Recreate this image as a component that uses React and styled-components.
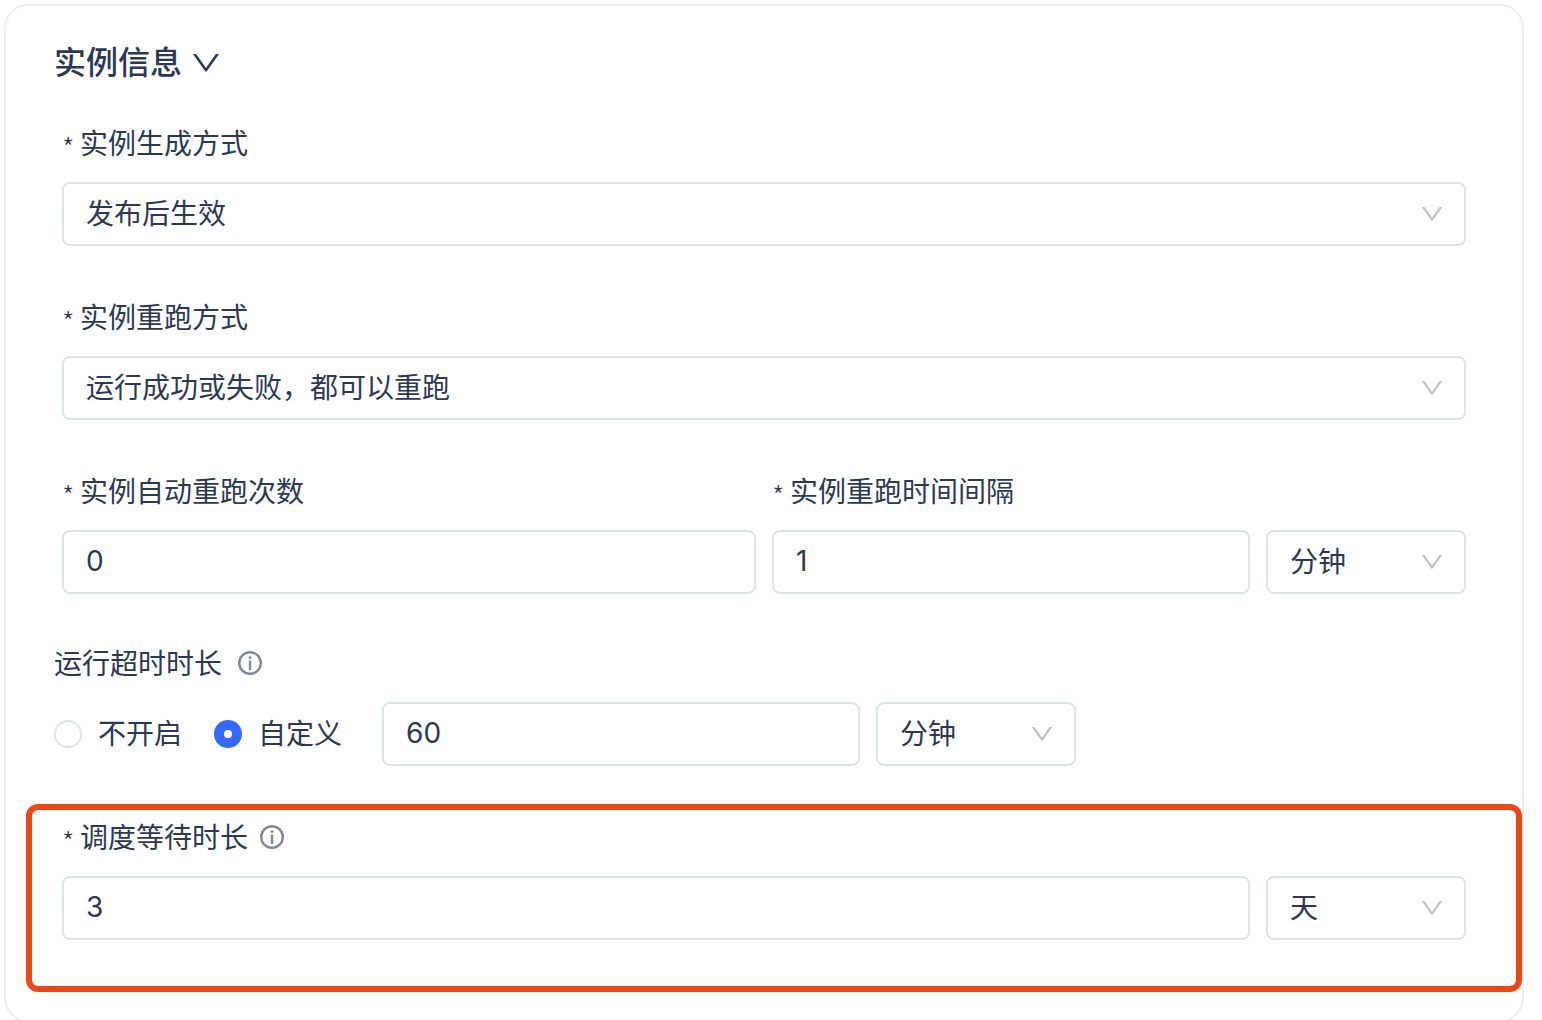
import React, { useState } from 'react';
import styled, { createGlobalStyle, ThemeProvider } from 'styled-components';

const theme = {
  colors: {
    text: '#2b3954',
    border: '#dfe3eb',
    cardBorder: '#ebeff4',
    primary: '#3569fd',
    arrow: '#bfbfbf',
    info: '#7f899a',
    highlight: '#f04614',
  },
};

const GlobalStyle = createGlobalStyle`
  *, *::before, *::after {
    box-sizing: border-box;
  }
  body {
    margin: 0;
    background: #ffffff;
  }
  body, input, select, button {
    font-family: Inter, 'Noto Sans CJK SC', sans-serif;
    font-size: 28px;
    color: ${theme.colors.text};
  }
`;

const Page = styled.main`
  height: 100vh;
  overflow-y: auto;
  scrollbar-width: none;
  padding: 4px 18px 0 4px;
`;

const Card = styled.section`
  border: 2px solid ${({ theme }) => theme.colors.cardBorder};
  border-radius: 24px;
  padding: 34px 0 28px;
`;

const Title = styled.h2`
  margin: 0 48px 34px;
  font-size: 32px;
  font-weight: 500;
  line-height: 46px;
`;

const TitleButton = styled.button`
  display: flex;
  align-items: center;
  gap: 10px;
  padding: 0;
  border: none;
  background: none;
  font: inherit;
  cursor: pointer;
`;

const Fields = styled.div`
  display: flex;
  flex-direction: column;
  gap: 48px;
  padding: 0 56px;
`;

const Columns = styled.div`
  display: grid;
  grid-template-columns: 1fr 1fr;
  gap: 16px;
`;

const Field = styled.div`
  min-width: 0;
`;

const Timeout = styled.div`
  margin: 46px 48px 0;
`;

const Highlight = styled.div`
  margin: 38px 0 0 20px;
  padding: 4px 50px 46px 30px;
  border: 6px solid ${({ theme }) => theme.colors.highlight};
  border-radius: 12px;
`;

const LabelRow = styled.div`
  display: flex;
  align-items: center;
  gap: ${({ $gap }) => $gap || 12}px;
  height: 46px;
  margin-bottom: 16px;
`;

const Label = styled.label`
  display: flex;
  align-items: center;
  padding-top: 2px;
  line-height: 46px;
`;

const Star = styled.span`
  width: 18px;
  padding-top: 6px;
  font-family: 'Noto Sans CJK SC', sans-serif;
  font-weight: 300;
`;

const Row = styled.div`
  display: flex;
  align-items: center;
  gap: 16px;
`;

const Input = styled.input`
  flex: ${({ $wide }) => ($wide ? '0 1 478px' : '1 1 0')};
  min-width: 0;
  width: 100%;
  height: 64px;
  padding: 0 22px 2px;
  border: 2px solid ${({ theme }) => theme.colors.border};
  border-radius: 8px;
  background: #ffffff;
  outline: none;

  &:focus {
    border-color: ${({ theme }) => theme.colors.primary};
  }
`;

const SelectBox = styled.div`
  display: grid;
  align-items: center;
  flex: 0 0 ${({ $unit }) => ($unit ? '200px' : '100%')};

  > * {
    grid-area: 1 / 1;
  }
  > svg {
    justify-self: end;
    margin-right: 24px;
    pointer-events: none;
  }
`;

const NativeSelect = styled.select`
  appearance: none;
  width: 100%;
  height: 64px;
  padding: 0 50px 0 22px;
  border: 2px solid ${({ theme }) => theme.colors.border};
  border-radius: 8px;
  background: #ffffff;
  outline: none;

  &:focus {
    border-color: ${({ theme }) => theme.colors.primary};
  }
`;

const RadioGroup = styled.div`
  display: flex;
  gap: 32px;
  margin-right: 24px;
`;

const RadioLabel = styled.label`
  display: flex;
  align-items: center;
  gap: 16px;
  line-height: 46px;
  white-space: nowrap;
`;

const Radio = styled.input`
  appearance: none;
  width: 28px;
  height: 28px;
  margin: 0;
  border: 2px solid ${({ theme }) => theme.colors.border};
  border-radius: 50%;
  background: #ffffff;

  &:checked {
    border: 10px solid ${({ theme }) => theme.colors.primary};
  }
`;

function Chevron({ width, height, color }) {
  return (
    <svg width={width} height={height} viewBox="0 0 20 14" fill={color} aria-hidden="true">
      <path d="M0.2 0H2.1Q2.4 0 2.6 0.3L10 10.8L17.4 0.3Q17.6 0 17.9 0H19.8Q20.1 0 19.9 0.4L10.6 13.5Q10 14.2 9.4 13.5L0.1 0.4Q-0.1 0 0.2 0Z" />
    </svg>
  );
}

function InfoIcon() {
  return (
    <svg width="24" height="24" viewBox="0 0 24 24" fill="none" stroke={theme.colors.info} role="img" aria-label="说明">
      <circle cx="12" cy="12" r="10.8" strokeWidth="2.4" />
      <path d="M12 10.4V18" strokeWidth="2.4" strokeLinecap="round" />
      <circle cx="12" cy="6.6" r="1.4" fill={theme.colors.info} stroke="none" />
    </svg>
  );
}

function FieldLabel({ htmlFor, children, info }) {
  return (
    <LabelRow>
      <Label htmlFor={htmlFor}>
        <Star>*</Star>
        {children}
      </Label>
      {info && <InfoIcon />}
    </LabelRow>
  );
}

function Select({ unit, options, ...rest }) {
  return (
    <SelectBox $unit={unit}>
      <NativeSelect {...rest}>
        {options.map((option) => (
          <option key={option}>{option}</option>
        ))}
      </NativeSelect>
      <Chevron width={20} height={14} color={theme.colors.arrow} />
    </SelectBox>
  );
}

export default function App() {
  const [open, setOpen] = useState(true);
  const [timeout, setTimeoutMode] = useState('custom');

  return (
    <ThemeProvider theme={theme}>
      <GlobalStyle />
      <Page>
        <Card>
          <Title>
            <TitleButton type="button" aria-expanded={open} onClick={() => setOpen(!open)}>
              实例信息
              <Chevron width={28} height={18} color={theme.colors.text} />
            </TitleButton>
          </Title>
          {open && (
            <>
              <Fields>
                <Field>
                  <FieldLabel htmlFor="generate">实例生成方式</FieldLabel>
                  <Select id="generate" options={['发布后生效']} />
                </Field>
                <Field>
                  <FieldLabel htmlFor="rerun">实例重跑方式</FieldLabel>
                  <Select id="rerun" options={['运行成功或失败，都可以重跑']} />
                </Field>
                <Columns>
                  <Field>
                    <FieldLabel htmlFor="times">实例自动重跑次数</FieldLabel>
                    <Input id="times" defaultValue="0" />
                  </Field>
                  <Field>
                    <FieldLabel htmlFor="interval">实例重跑时间间隔</FieldLabel>
                    <Row>
                      <Input id="interval" defaultValue="1" />
                      <Select unit aria-label="间隔单位" options={['分钟']} />
                    </Row>
                  </Field>
                </Columns>
              </Fields>

              <Timeout>
                <LabelRow $gap={16}>
                  <Label htmlFor="timeout">运行超时时长</Label>
                  <InfoIcon />
                </LabelRow>
                <Row>
                  <RadioGroup>
                    <RadioLabel>
                      <Radio
                        type="radio"
                        name="timeout"
                        checked={timeout === 'off'}
                        onChange={() => setTimeoutMode('off')}
                      />
                      不开启
                    </RadioLabel>
                    <RadioLabel>
                      <Radio
                        type="radio"
                        name="timeout"
                        checked={timeout === 'custom'}
                        onChange={() => setTimeoutMode('custom')}
                      />
                      自定义
                    </RadioLabel>
                  </RadioGroup>
                  <Input id="timeout" $wide defaultValue="60" />
                  <Select unit aria-label="超时单位" options={['分钟', '小时']} />
                </Row>
              </Timeout>

              <Highlight>
                <FieldLabel htmlFor="wait" info>调度等待时长</FieldLabel>
                <Row>
                  <Input id="wait" defaultValue="3" />
                  <Select unit aria-label="等待单位" options={['天', '小时']} />
                </Row>
              </Highlight>
            </>
          )}
        </Card>
      </Page>
    </ThemeProvider>
  );
}
